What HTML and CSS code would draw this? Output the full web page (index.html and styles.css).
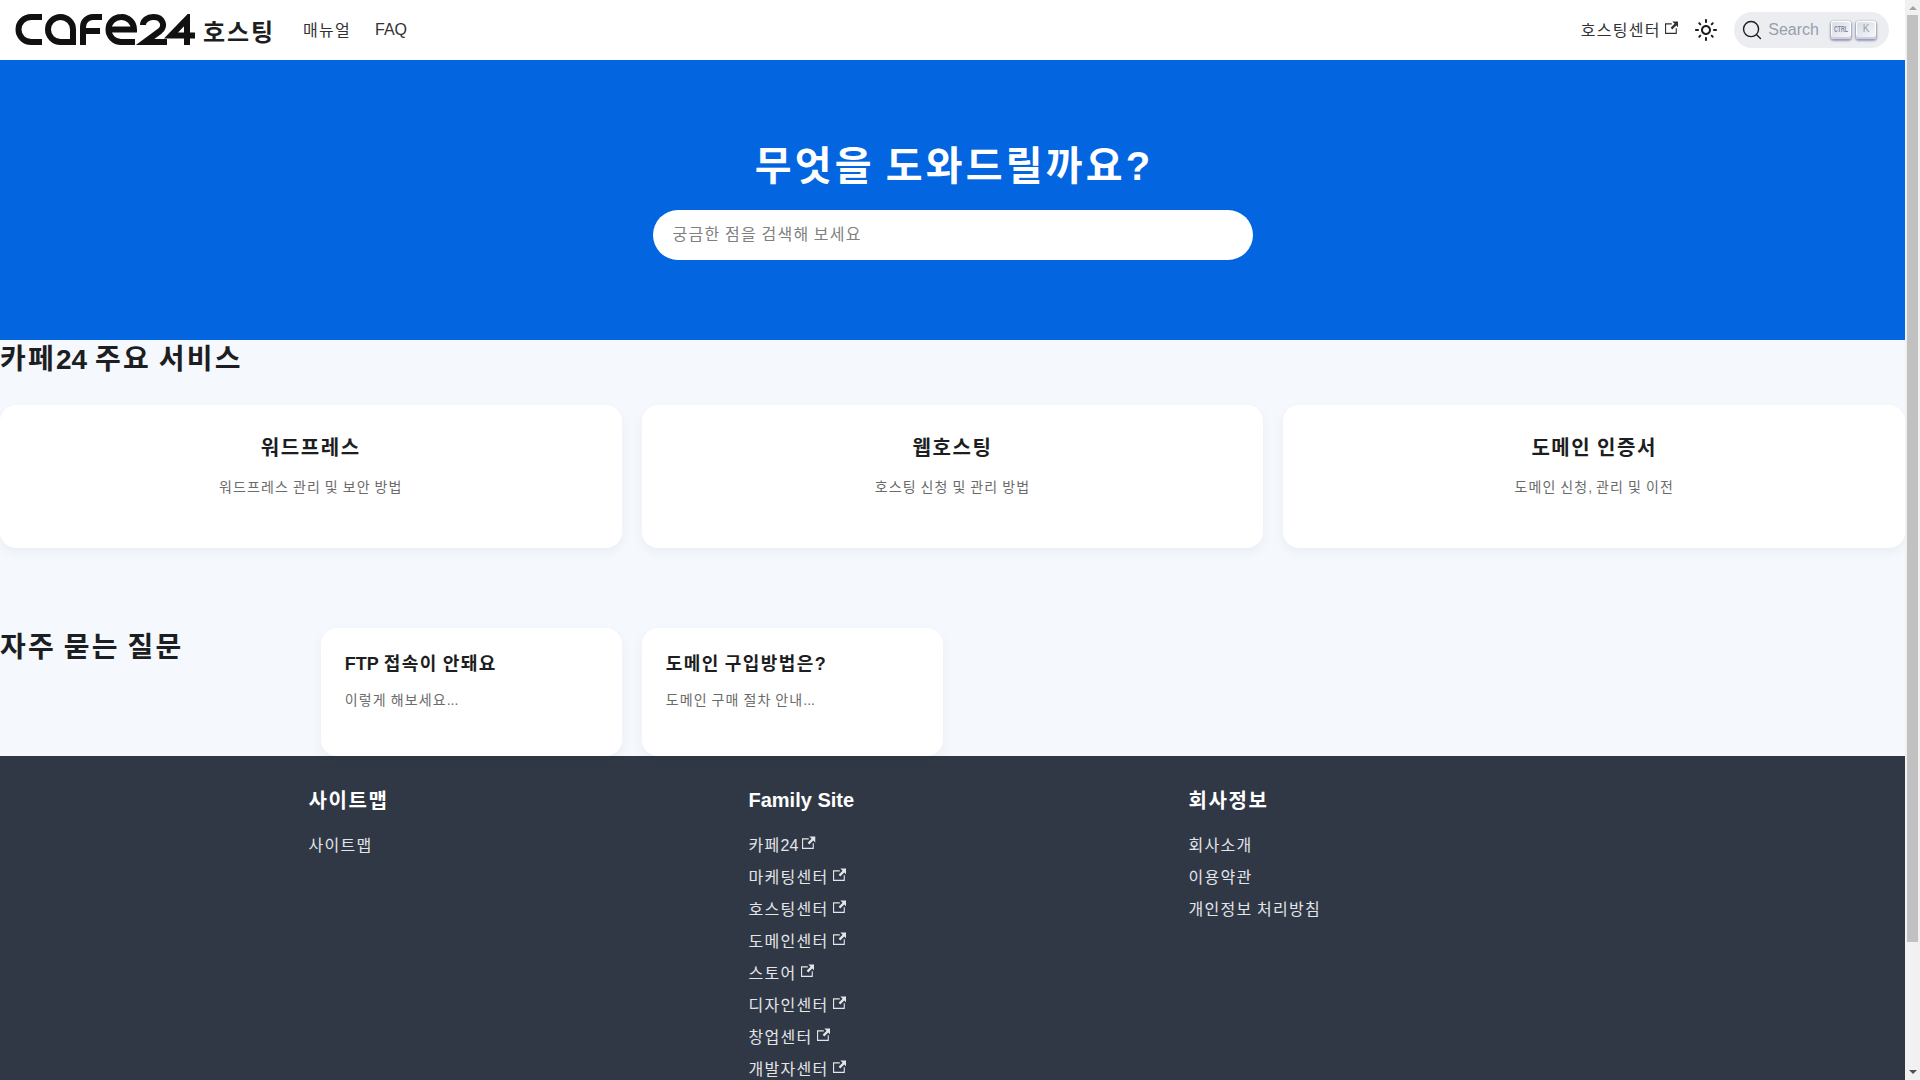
FILE: index.html
```html
<!DOCTYPE html>
<html lang="ko">
<head>
    <meta charset="UTF-8">
    <meta name="viewport" content="width=device-width, initial-scale=1.0">
    <title>카페24 호스팅</title>
    <link rel="stylesheet" href="styles.css">
</head>
<body>

    <svg class="icon-defs" width="0" height="0">
        <symbol id="ext" viewBox="0 0 24 24"><path fill="currentColor" d="M21 13v10h-21v-19h12v2h-10v15h17v-8h2zm3-12h-10.988l4.035 4-6.977 7.07 2.828 2.828 6.977-7.07 4.125 4.172v-11z"/></symbol>
    </svg>

    <!-- Window scrollbar -->
    <div class="scrollbar">
        <span class="scroll-arrow scroll-up"></span>
        <span class="scroll-thumb"></span>
        <span class="scroll-arrow scroll-down"></span>
    </div>

    <div class="page">

    <!-- Navbar -->
    <nav class="navbar">
        <a class="brand" href="#">
            <svg class="brand-logo" viewBox="0 0 180 32" fill="none" stroke="#111" stroke-width="6">
                <path d="M27 3 H16 a12.5 12.5 0 0 0 0 25 H27"/>
                <path d="M58 31 V15.5 a12.5 12.5 0 1 0 -12.5 12.5 H58"/>
                <path d="M68 31 V13 a10 10 0 0 1 10 -10 H87 M68 17 H85"/>
                <path d="M93 15.5 H119 A12.5 12.5 0 0 0 106 3 A12.5 12.5 0 0 0 106 28 H120"/>
                <path d="M128 11 a10 8 0 0 1 10 -8 h1 a9 8 0 0 1 6 14 L130 28 H152"/>
                <path d="M172 31 V5 L156 21.5 H180"/>
            </svg>
            <span class="brand-name">호스팅</span>
        </a>
        <a class="nav-link nav-link-ko" href="#">매뉴얼</a>
        <a class="nav-link latin" href="#">FAQ</a>
        <div class="nav-right">
            <a class="nav-link nav-link-ko" href="#">호스팅센터<svg class="ext"><use href="#ext"/></svg></a>
            <button class="theme-btn">
                <svg viewBox="0 0 24 24" width="24" height="24"><path fill="currentColor" d="M12,9c1.65,0,3,1.35,3,3s-1.35,3-3,3s-3-1.35-3-3S10.35,9,12,9 M12,7c-2.76,0-5,2.24-5,5s2.24,5,5,5s5-2.24,5-5 S14.76,7,12,7L12,7z M2,13l2,0c0.55,0,1-0.45,1-1s-0.45-1-1-1l-2,0c-0.55,0-1,0.45-1,1S1.45,13,2,13z M20,13l2,0c0.55,0,1-0.45,1-1 s-0.45-1-1-1l-2,0c-0.55,0-1,0.45-1,1S19.45,13,20,13z M11,2v2c0,0.55,0.45,1,1,1s1-0.45,1-1V2c0-0.55-0.45-1-1-1S11,1.45,11,2z M11,20v2c0,0.55,0.45,1,1,1s1-0.45,1-1v-2c0-0.55-0.45-1-1-1C11.45,19,11,19.45,11,20z M5.99,4.58c-0.39-0.39-1.03-0.39-1.41,0 c-0.39,0.39-0.39,1.03,0,1.41l1.06,1.06c0.39,0.39,1.03,0.39,1.41,0s0.39-1.03,0-1.41L5.99,4.58z M18.36,16.95 c-0.39-0.39-1.03-0.39-1.41,0c-0.39,0.39-0.39,1.03,0,1.41l1.06,1.06c0.39,0.39,1.03,0.39,1.41,0c0.39-0.39,0.39-1.03,0-1.41 L18.36,16.95z M19.42,5.99c0.39-0.39,0.39-1.03,0-1.41c-0.39-0.39-1.03-0.39-1.41,0l-1.06,1.06c-0.39,0.39-0.39,1.03,0,1.41 s1.03,0.39,1.41,0L19.42,5.99z M7.05,18.36c0.39-0.39,0.39-1.03,0-1.41c-0.39-0.39-1.03-0.39-1.41,0l-1.06,1.06 c-0.39,0.39-0.39,1.03,0,1.41s1.03,0.39,1.41,0L7.05,18.36z"/></svg>
            </button>
            <button class="search-btn latin">
                <svg viewBox="0 0 20 20" width="20" height="20"><path fill="none" stroke="currentColor" stroke-width="1.4" stroke-linecap="round" stroke-linejoin="round" d="M14.386 14.386l4.0877 4.0877-4.0877-4.0877c-2.9418 2.9419-7.7115 2.9419-10.6533 0-2.9419-2.9418-2.9419-7.7115 0-10.6533 2.9418-2.9419 7.7115-2.9419 10.6533 0 2.9419 2.9418 2.9419 7.7115 0 10.6533z"/></svg>
                <span class="search-label">Search</span>
                <span class="keys"><kbd class="key key-ctrl"><span>CTRL</span></kbd><kbd class="key">K</kbd></span>
            </button>
        </div>
    </nav>

    <!-- Hero -->
    <header class="hero">
        <h1>무엇을 도와드릴까요<span class="latin">?</span></h1>
        <input class="hero-search" type="text" placeholder="궁금한 점을 검색해 보세요">
    </header>

    <!-- Main services -->
    <section class="services">
        <h2>카페<span class="latin">24</span> 주요 서비스</h2>
        <div class="service-grid">
            <a class="card service-card" href="#"><h3>워드프레스</h3><p>워드프레스 관리 및 보안 방법</p></a>
            <a class="card service-card" href="#"><h3>웹호스팅</h3><p>호스팅 신청 및 관리 방법</p></a>
            <a class="card service-card" href="#"><h3>도메인 인증서</h3><p>도메인 신청<span class="latin">,</span> 관리 및 이전</p></a>
        </div>
    </section>

    <!-- FAQ -->
    <section class="faq">
        <h2>자주 묻는 질문</h2>
        <a class="card faq-card" href="#"><h3><span class="latin">FTP</span> 접속이 안돼요</h3><p>이렇게 해보세요<span class="latin">...</span></p></a>
        <a class="card faq-card" href="#"><h3>도메인 구입방법은<span class="latin">?</span></h3><p>도메인 구매 절차 안내<span class="latin">...</span></p></a>
    </section>

    <!-- Footer -->
    <footer class="footer">
        <div class="footer-cols">
            <div class="footer-col">
                <h4>사이트맵</h4>
                <a href="#">사이트맵</a>
            </div>
            <div class="footer-col">
                <h4 class="latin">Family Site</h4>
                <a href="#">카페<span class="latin">24</span><svg class="ext"><use href="#ext"/></svg></a>
                <a href="#">마케팅센터<svg class="ext"><use href="#ext"/></svg></a>
                <a href="#">호스팅센터<svg class="ext"><use href="#ext"/></svg></a>
                <a href="#">도메인센터<svg class="ext"><use href="#ext"/></svg></a>
                <a href="#">스토어<svg class="ext"><use href="#ext"/></svg></a>
                <a href="#">디자인센터<svg class="ext"><use href="#ext"/></svg></a>
                <a href="#">창업센터<svg class="ext"><use href="#ext"/></svg></a>
                <a href="#">개발자센터<svg class="ext"><use href="#ext"/></svg></a>
            </div>
            <div class="footer-col">
                <h4>회사정보</h4>
                <a href="#">회사소개</a>
                <a href="#">이용약관</a>
                <a href="#">개인정보 처리방침</a>
            </div>
        </div>
    </footer>

    </div>

</body>
</html>
```

FILE: styles.css
```css
/* General */
html, body {
    margin: 0;
    padding: 0;
}

body {
    font-family: "Liberation Sans", "Noto Sans CJK KR", sans-serif;
    font-size: 16px;
    color: #1c1e21;
    background-color: #f5f8fc;
}

a {
    color: inherit;
    text-decoration: none;
}

h1, h2, h3, h4, p {
    margin: 0;
}

/* hangul sits on a full em in the original, em spacing has to be set per size */
a, h1, h2, h3, h4, p, .brand-name, .hero-search {
    letter-spacing: 0.08em;
    word-spacing: -0.08em;
}

.latin, a .latin, h1 .latin, h2 .latin, h3 .latin, h4.latin, p .latin {
    letter-spacing: 0;
    word-spacing: 0;
}

.page {
    width: 1905px;
}

.icon-defs {
    position: absolute;
}

.ext {
    width: 13.5px;
    height: 13.5px;
    margin-left: 4px;
    vertical-align: 2px;
}

/* Scrollbar */
.scrollbar {
    position: fixed;
    top: 0;
    right: 0;
    bottom: 0;
    width: 15px;
    display: flex;
    flex-direction: column;
    align-items: center;
    background-color: #f1f1f1;
}

.scroll-arrow {
    flex: none;
    width: 0;
    height: 0;
    border-left: 4px solid transparent;
    border-right: 4px solid transparent;
}

.scroll-up {
    margin: 6px 0 5px;
    border-bottom: 4px solid #a3a3a3;
}

.scroll-down {
    margin: auto 0 6px;
    border-top: 4px solid #505050;
}

.scroll-thumb {
    width: 11px;
    height: 927px;
    background-color: #c1c1c1;
}

/* Navbar */
.navbar {
    display: flex;
    align-items: center;
    height: 60px;
    padding: 0 16px;
    box-sizing: border-box;
    background-color: #fff;
}

.brand {
    display: flex;
    align-items: center;
    margin-right: 16px;
}

.brand-logo {
    width: 180px;
    height: 32px;
    margin-left: -1px;
    margin-right: 8px;
}

.brand-name {
    font-size: 24px;
    font-weight: 600;
}

.nav-link {
    padding: 6px 12px;
    color: #303236;
}

.nav-link-ko {
    padding: 5px 12px 7px;
}

.nav-right {
    display: flex;
    align-items: center;
    margin-left: auto;
}

.theme-btn {
    display: flex;
    align-items: center;
    justify-content: center;
    width: 32px;
    height: 32px;
    padding: 0;
    border: none;
    background: none;
    color: #1c1e21;
}

.search-btn {
    display: flex;
    align-items: center;
    height: 36px;
    margin-left: 12px;
    padding: 0 8px;
    border: none;
    border-radius: 40px;
    background-color: #ebedf0;
    color: #1c1e21;
    font-family: inherit;
}

.search-label {
    margin-left: 6px;
    font-size: 16px;
    color: #969faf;
}

.keys {
    display: flex;
    gap: 5px;
    margin-left: 12px;
    margin-right: 5px;
}

.key {
    display: flex;
    align-items: center;
    justify-content: center;
    width: 20px;
    height: 18px;
    border-radius: 3px;
    background: linear-gradient(-225deg, #d5dbe4, #f8f8f8);
    box-shadow: inset 0 -2px 0 0 #cdcde6, inset 0 0 1px 1px #fff, 0 1px 2px 1px rgba(30, 35, 90, 0.4);
    color: #969faf;
    font-family: "Liberation Sans", sans-serif;
    font-size: 10px;
    padding-bottom: 3px;
    box-sizing: border-box;
}

.key-ctrl {
    color: #7f88a0;
}

.key-ctrl span {
    font-size: 9px;
    font-weight: 700;
    transform: scaleX(0.58);
}

/* Hero */
.hero {
    display: flex;
    flex-direction: column;
    align-items: center;
    height: 280px;
    padding-top: 81px;
    box-sizing: border-box;
    background-color: #0365e0;
}

.hero h1 {
    font-size: 40px;
    line-height: 50px;
    font-weight: 700;
    color: #fff;
    margin-bottom: 19px;
}

.hero-search {
    width: 600px;
    height: 50px;
    padding: 0 20px;
    box-sizing: border-box;
    border: none;
    border-radius: 25px;
    background-color: #fff;
    font-family: inherit;
    font-size: 16px;
}

.hero-search::placeholder {
    color: #808080;
}

/* Cards */
.card {
    display: block;
    box-sizing: border-box;
    background-color: #fff;
    border-radius: 16px;
    box-shadow: 0 4px 12px rgba(0, 0, 0, 0.05);
}

.card p {
    font-size: 14px;
    color: #6b6b6b;
}

/* Services */
.services h2, .faq h2 {
    font-size: 28px;
    line-height: 40px;
    font-weight: 700;
}

.service-grid {
    display: grid;
    grid-template-columns: repeat(3, 1fr);
    gap: 20px;
    margin-top: 25px;
}

.service-card {
    height: 143px;
    padding: 29px 24px;
    text-align: center;
}

.service-card h3 {
    font-size: 20px;
    line-height: 28px;
    font-weight: 600;
    margin-bottom: 14px;
}

/* FAQ */
.faq {
    display: grid;
    grid-template-columns: repeat(6, 1fr);
    gap: 20px;
    margin-top: 80px;
}

.faq-card {
    height: 128px;
    padding: 24px;
}

.faq-card h3 {
    font-size: 18px;
    line-height: 24px;
    font-weight: 700;
    margin-bottom: 13px;
}

/* Footer */
.footer {
    padding: 33px 0 64px;
    background-color: #303846;
    color: #e3e5e9;
}

.footer-cols {
    display: flex;
    width: 1320px;
    margin: 0 auto;
}

.footer-col {
    display: flex;
    flex-direction: column;
    align-items: flex-start;
    flex: 1;
    padding: 0 16px;
}

.footer-col h4 {
    font-size: 20px;
    line-height: 25px;
    font-weight: 700;
    color: #fff;
    margin-bottom: 16px;
}

.footer-col h4.latin {
    margin-top: -1px;
    margin-bottom: 17px;
}

.footer-col a {
    line-height: 32px;
}
```
